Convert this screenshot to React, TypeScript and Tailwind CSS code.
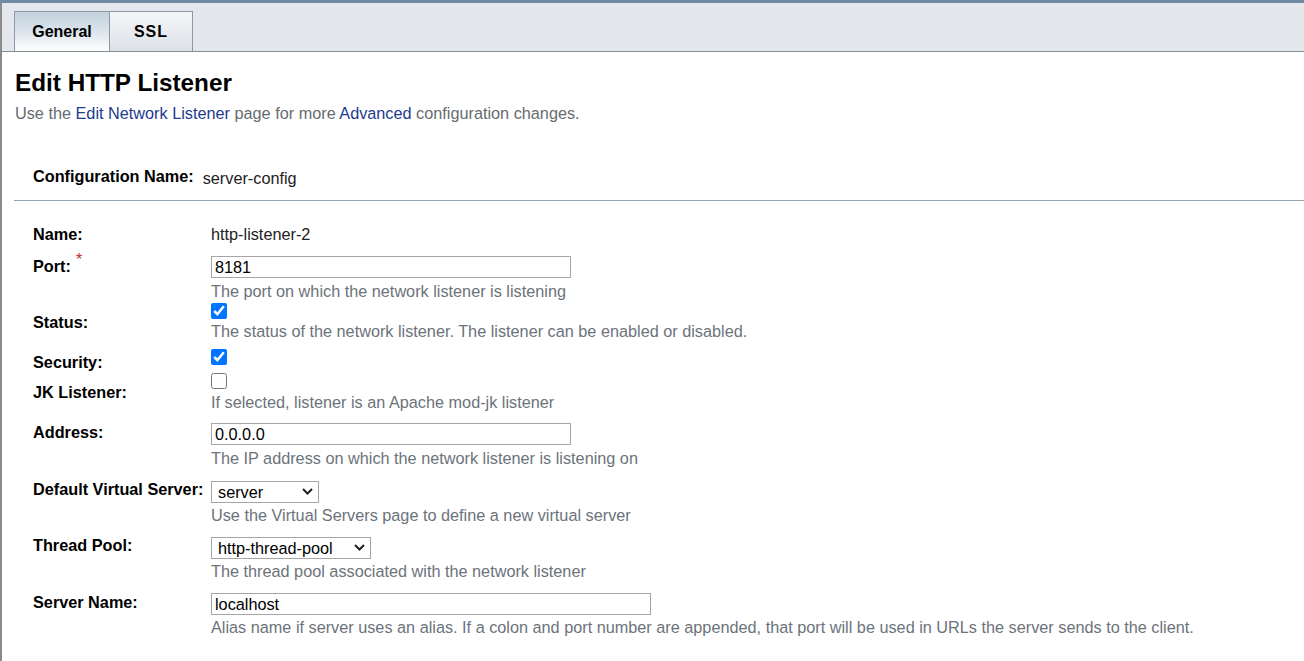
import React from 'react';

type RowProps = {
  label: string;
  rowClass: string;
  labelClass?: string;
  required?: boolean;
  children: React.ReactNode;
};

const Row: React.FC<RowProps> = ({ label, rowClass, labelClass = '', required, children }) => (
  <div className={`flex items-start ${rowClass}`}>
    <div className={`w-[197px] shrink-0 pl-[19px] font-bold text-black leading-[18px] ${labelClass}`}>
      {label}
      {required && <span className="relative -top-[7px] ml-[5px] text-[16px] font-normal text-[#c2272d]">*</span>}
    </div>
    <div className="flex flex-col items-start">{children}</div>
  </div>
);

const Help: React.FC<{ className?: string; children: React.ReactNode }> = ({ className = 'mt-[4px]', children }) => (
  <div className={`${className} leading-[18px] text-[#6c737b]`}>{children}</div>
);

const TextField: React.FC<{ value: string; width: string }> = ({ value, width }) => (
  <input
    type="text"
    defaultValue={value}
    className={`${width} h-[22px] border border-[#a6a6a6] bg-white pl-[3px] text-[16.25px] leading-[20px] text-black outline-none`}
  />
);

const Select: React.FC<{ value: string; options: string[]; width: string }> = ({ value, options, width }) => (
  <div className={`relative ${width} h-[22px]`}>
    <select
      defaultValue={value}
      className="h-full w-full appearance-none border border-[#a6a6a6] bg-white pl-[6px] text-[16.25px] leading-[20px] text-black outline-none"
    >
      {options.map(o => <option key={o} value={o}>{o}</option>)}
    </select>
    <svg className="pointer-events-none absolute right-[6px] top-[8px]" width="11" height="7" viewBox="0 0 11 7">
      <path d="M1 1l4.5 4.5L10 1" fill="none" stroke="#222" strokeWidth="2" />
    </svg>
  </div>
);

const Check: React.FC<{ checked?: boolean }> = ({ checked }) => (
  <input type="checkbox" defaultChecked={checked} className="m-0 h-4 w-4" />
);

export default function App() {
  return (
    <div className="min-h-[661px] bg-white border-t-[3px] border-t-[#6f8ca6] border-l-2 border-l-[#8a8a8a] font-['Liberation_Sans',Arial,sans-serif] text-[16.25px]">
      <div className="flex bg-[#e4e7ec] pl-[12px] pt-[8px] border-b border-[#848c94]">
        <div className="flex h-[40px] w-[96px] items-center justify-center border-l border-t border-r border-[#8c98a3] bg-gradient-to-b from-[#c2d2de] via-[#dbe4ec] to-white font-bold text-[16px] text-black">
          General
        </div>
        <div className="flex h-[40px] w-[83px] items-center justify-center border-t border-r border-[#8c98a3] bg-gradient-to-b from-[#f5f6f8] to-[#dde1e6] font-bold text-[16px] tracking-[1px] text-black">
          SSL
        </div>
      </div>

      <div className="pl-[12px]">
        <h1 className="mt-[17px] pl-[1px] text-[24.3px] font-bold leading-[28px] text-black">Edit HTTP Listener</h1>
        <p className="mt-[7px] pl-[1px] leading-[18px] text-[#666b70]">
          Use the <a className="text-[#223a8f]">Edit Network Listener</a> page for more{' '}
          <a className="text-[#223a8f]">Advanced</a> configuration changes.
        </p>

        <div className="mt-[45px] flex items-start border-b border-[#95a3ae] pb-[15px] pl-[19px]">
          <span className="font-bold leading-[18px] text-black">Configuration Name:</span>
          <span className="relative top-[2px] ml-[9px] leading-[18px] text-[#222]">server-config</span>
        </div>

        <Row label="Name:" rowClass="mt-[24px]">
          <div className="leading-[18px] text-[#222]">http-listener-2</div>
        </Row>

        <Row label="Port:" required rowClass="mt-[13px]" labelClass="pt-[1px]">
          <TextField value="8181" width="w-[360px]" />
          <Help>The port on which the network listener is listening</Help>
        </Row>

        <Row label="Status:" rowClass="mt-[3px]" labelClass="pt-[10px]">
          <Check checked />
          <Help className="mt-[3px]">The status of the network listener. The listener can be enabled or disabled.</Help>
        </Row>

        <Row label="Security:" rowClass="mt-[9px]" labelClass="pt-[4px]">
          <Check checked />
        </Row>

        <Row label="JK Listener:" rowClass="mt-[2px]" labelClass="pt-[10px]">
          <Check />
          <Help>If selected, listener is an Apache mod-jk listener</Help>
        </Row>

        <Row label="Address:" rowClass="mt-[12px]">
          <TextField value="0.0.0.0" width="w-[360px]" />
          <Help>The IP address on which the network listener is listening on</Help>
        </Row>

        <Row label="Default Virtual Server:" rowClass="mt-[13px]">
          <Select value="server" options={['server', '__asadmin']} width="w-[108px]" />
          <Help>Use the Virtual Servers page to define a new virtual server</Help>
        </Row>

        <Row label="Thread Pool:" rowClass="mt-[12px]">
          <Select value="http-thread-pool" options={['http-thread-pool', 'admin-thread-pool']} width="w-[160px]" />
          <Help>The thread pool associated with the network listener</Help>
        </Row>

        <Row label="Server Name:" rowClass="mt-[13px]">
          <TextField value="localhost" width="w-[440px]" />
          <Help className="mt-[3px]">
            Alias name if server uses an alias. If a colon and port number are appended, that port will be used in URLs the server sends to the client.
          </Help>
        </Row>
      </div>
    </div>
  );
}
